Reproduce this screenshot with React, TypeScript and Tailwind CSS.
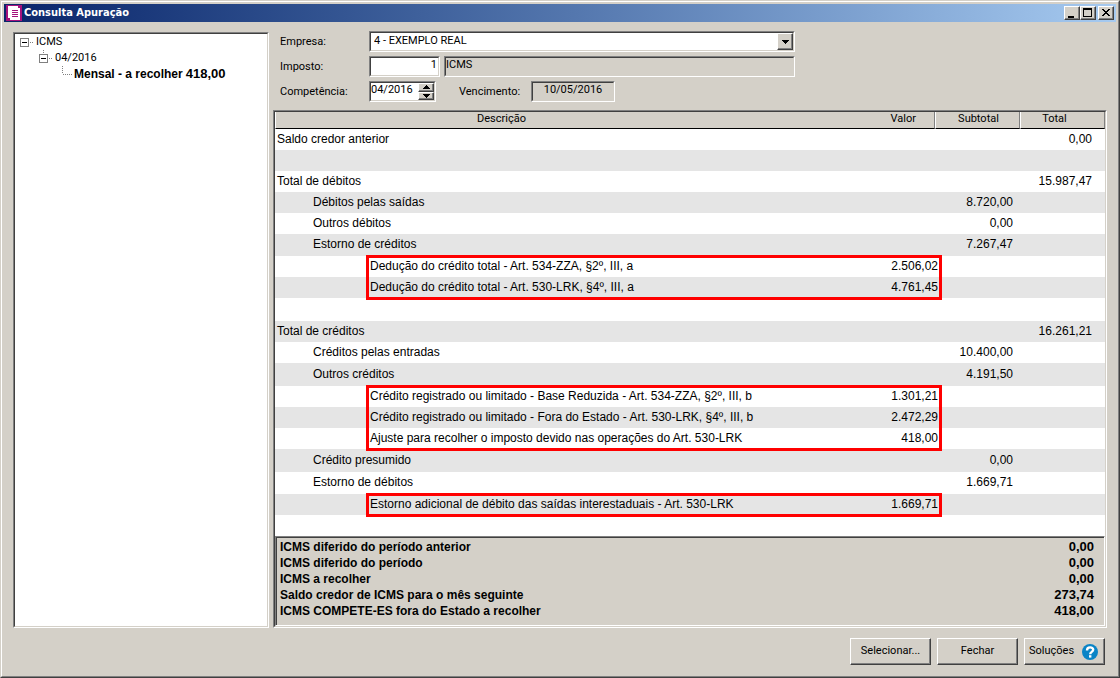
import { useState } from "react";

const lines = [
  { label: "Saldo credor anterior", level: 0, total: "0,00", height: "h-[21px]" },
  { height: "h-[21px]" },
  { label: "Total de débitos", level: 0, total: "15.987,47", height: "h-[21px]" },
  { label: "Débitos pelas saídas", level: 1, subtotal: "8.720,00", height: "h-[21px]" },
  { label: "Outros débitos", level: 1, subtotal: "0,00", height: "h-[21px]" },
  { label: "Estorno de créditos", level: 1, subtotal: "7.267,47", height: "h-[22px]" },
  {
    label: "Dedução do crédito total - Art. 534-ZZA, §2º, III, a",
    level: 2,
    valor: "2.506,02",
    height: "h-[21px]",
    frame: "h-[45px]",
  },
  {
    label: "Dedução do crédito total - Art. 530-LRK, §4º, III, a",
    level: 2,
    valor: "4.761,45",
    height: "h-[21px]",
  },
  { height: "h-[23px]" },
  { label: "Total de créditos", level: 0, total: "16.261,21", height: "h-[21px]" },
  { label: "Créditos pelas entradas", level: 1, subtotal: "10.400,00", height: "h-[21px]" },
  { label: "Outros créditos", level: 1, subtotal: "4.191,50", height: "h-[23px]" },
  {
    label: "Crédito registrado ou limitado - Base Reduzida - Art. 534-ZZA, §2º, III, b",
    level: 2,
    valor: "1.301,21",
    height: "h-[21px]",
    frame: "h-[66px]",
  },
  {
    label: "Crédito registrado ou limitado - Fora do Estado - Art. 530-LRK, §4º, III, b",
    level: 2,
    valor: "2.472,29",
    height: "h-[21px]",
  },
  {
    label: "Ajuste para recolher o imposto devido nas operações do Art. 530-LRK",
    level: 2,
    valor: "418,00",
    height: "h-[21px]",
  },
  { label: "Crédito presumido", level: 1, subtotal: "0,00", height: "h-[23px]" },
  { label: "Estorno de débitos", level: 1, subtotal: "1.669,71", height: "h-[22px]" },
  {
    label: "Estorno adicional de débito das saídas interestaduais - Art. 530-LRK",
    level: 2,
    valor: "1.669,71",
    height: "h-[21px]",
    frame: "h-[24px]",
  },
  { height: "h-[21px]" },
];

const summary = [
  ["ICMS diferido do período anterior", "0,00"],
  ["ICMS diferido do período", "0,00"],
  ["ICMS a recolher", "0,00"],
  ["Saldo credor de ICMS para o mês seguinte", "273,74"],
  ["ICMS COMPETE-ES fora do Estado a recolher", "418,00"],
];

const indent = ["pl-[2px]", "pl-[38px]", "pl-[95px]"];

const sunken =
  "border border-t-[#808080] border-l-[#808080] border-r-white border-b-white";
const sunkenInner =
  "border border-t-[#404040] border-l-[#404040] border-r-[#d4d0c8] border-b-[#d4d0c8]";
const raised =
  "bg-[#d4d0c8] border border-t-white border-l-white border-r-[#404040] border-b-[#404040] shadow-[inset_-1px_-1px_0_#808080]";

function TitleButton({ label, children }: { label: string; children: any }) {
  return (
    <button
      aria-label={label}
      className={`w-4 h-[14px] flex items-center justify-center ${raised}`}
    >
      <svg width="14" height="12" viewBox="0 0 14 12" shapeRendering="crispEdges">
        {children}
      </svg>
    </button>
  );
}

function Expander({ nested }: { nested?: boolean }) {
  return (
    <svg width="14" height="16" viewBox="0 0 14 16" shapeRendering="crispEdges" className="shrink-0">
      {nested && <path d="M4.5 0v4" stroke="#808080" strokeDasharray="1 1" />}
      <rect x="0.5" y="4.5" width="8" height="8" fill="white" stroke="#808080" />
      <path d="M2 8.5h5" stroke="black" />
      <path d="M10 8.5h3" stroke="#808080" strokeDasharray="1 1" />
    </svg>
  );
}

export default function App() {
  const [imposto, setImposto] = useState("1");
  const [competencia, setCompetencia] = useState("04/2016");

  return (
    <div className="min-h-screen flex flex-col bg-[#d4d0c8] text-black text-[11px] font-[Roboto,'Liberation_Sans',sans-serif] border border-t-[#d4d0c8] border-l-[#d4d0c8] border-r-[#404040] border-b-[#404040]">
      <div className="flex-1 flex flex-col p-[2px] border border-t-white border-l-white border-r-[#808080] border-b-[#808080]">
        {/* Title bar */}
        <header className="h-[18px] flex items-center pl-[2px] pr-[2px] bg-linear-to-r from-[#0a246a] to-[#a6caf0]">
          <svg width="16" height="16" viewBox="0 0 16 16" className="mr-[2px] shrink-0" shapeRendering="crispEdges">
            <rect width="16" height="16" fill="#a5117c" />
            <path d="M2 1h10v2h2v12H4v-2H2z" fill="white" />
            <path d="M6 5.5h6M6 7.5h6M6 9.5h6M6 11.5h6" stroke="#a5117c" />
          </svg>
          <h1 className="flex-1 text-white font-bold text-[11px] font-['DejaVu_Sans_Condensed','DejaVu_Sans',sans-serif]">
            Consulta Apuração
          </h1>
          <div className="flex">
            <TitleButton label="Minimizar">
              <path d="M3 9h6v2H3z" />
            </TitleButton>
            <TitleButton label="Maximizar">
              <path d="M2 1h9v9H2zM3 3v6h7V3z" fillRule="evenodd" />
            </TitleButton>
            <div className="ml-[2px] flex">
              <TitleButton label="Fechar janela">
                <path d="M3 2h2v1h1v1h2V3h1V2h2v1h-1v1H9v1H8v1h1v1h1v1h1v1H9V8H8V7H6v1H5v1H3V8h1V7h1V6h1V5H5V4H4V3H3z" />
              </TitleButton>
            </div>
          </div>
        </header>

        <div className="flex-1 flex gap-1 pt-[10px] pl-[9px] pr-[9px]">
          {/* Tree */}
          <nav className={`w-[256px] shrink-0 flex ${sunken}`}>
            <ul className={`flex-1 bg-white pl-[5px] leading-4 ${sunkenInner}`}>
              <li>
                <div className="flex items-center gap-[2px]">
                  <Expander />
                  ICMS
                </div>
                <ul className="pl-[19px]">
                  <li>
                    <div className="flex items-center gap-[2px]">
                      <Expander nested />
                      04/2016
                    </div>
                    <div className="flex items-center pl-[23px] font-bold text-xs leading-4 font-['Liberation_Sans',Arial,sans-serif]">
                      <svg width="12" height="16" viewBox="0 0 12 16" shapeRendering="crispEdges">
                        <path d="M0.5 0v8M1 8.5h9" stroke="#808080" strokeDasharray="1 1" fill="none" />
                      </svg>
                      <span className="mr-[3px]">Mensal - a recolher</span>
                      <span className="text-[13px] leading-4">418,00</span>
                    </div>
                  </li>
                </ul>
              </li>
            </ul>
          </nav>

          <div className="flex-1 min-w-0 flex flex-col">
            {/* Filters */}
            <form className="flex flex-col gap-1 pl-[7px] -mt-px mb-2" onSubmit={(e) => e.preventDefault()}>
              <div className="flex items-center">
                <label htmlFor="empresa" className="w-[89px] pt-0.5">Empresa:</label>
                <div className={`w-[426px] h-[21px] flex relative ${sunken}`}>
                  <select
                    id="empresa"
                    className={`flex-1 appearance-none bg-white pl-[3px] pb-0.5 leading-4 ${sunkenInner}`}
                  >
                    <option>4 - EXEMPLO REAL</option>
                  </select>
                  <span className={`absolute right-px top-px bottom-px w-4 flex items-center justify-center pointer-events-none ${raised}`}>
                    <svg width="7" height="4" viewBox="0 0 7 4" shapeRendering="crispEdges">
                      <path d="M0 0h7v1H6v1H5v1H4v1H3V3H2V2H1V1H0z" />
                    </svg>
                  </span>
                </div>
              </div>

              <div className="flex items-center">
                <label htmlFor="imposto" className="w-[89px] pt-0.5">Imposto:</label>
                <div className={`w-[71px] h-[21px] flex mr-1 ${sunken}`}>
                  <input
                    id="imposto"
                    value={imposto}
                    onChange={(e) => setImposto(e.target.value)}
                    className={`w-full bg-white text-right pr-px pb-0.5 ${sunkenInner}`}
                  />
                </div>
                <div className={`w-[351px] h-[21px] flex ${sunken}`}>
                  <input
                    aria-label="Nome do imposto"
                    readOnly
                    value="ICMS"
                    className={`w-full pb-0.5 ${sunkenInner}`}
                  />
                </div>
              </div>

              <div className="flex items-center">
                <label htmlFor="competencia" className="w-[89px] pt-0.5">Competência:</label>
                <div className={`w-[67px] h-[21px] flex mr-[23px] ${sunken}`}>
                  <div className={`flex w-full bg-white ${sunkenInner}`}>
                    <input
                      id="competencia"
                      value={competencia}
                      onChange={(e) => setCompetencia(e.target.value)}
                      className="w-0 flex-1 pb-0.5"
                    />
                    <div className="w-4 flex flex-col">
                      <button aria-label="Próxima" className={`flex-1 flex items-center justify-center ${raised}`}>
                        <svg width="7" height="4" viewBox="0 0 7 4" shapeRendering="crispEdges">
                          <path d="M3 0h1v1h1v1h1v1h1v1H0V3h1V2h1V1h1z" />
                        </svg>
                      </button>
                      <button aria-label="Anterior" className={`flex-1 flex items-center justify-center ${raised}`}>
                        <svg width="7" height="4" viewBox="0 0 7 4" shapeRendering="crispEdges">
                          <path d="M0 0h7v1H6v1H5v1H4v1H3V3H2V2H1V1H0z" />
                        </svg>
                      </button>
                    </div>
                  </div>
                </div>
                <label htmlFor="vencimento" className="w-[72px] pt-0.5">Vencimento:</label>
                <div className={`w-[84px] h-[21px] flex ${sunken}`}>
                  <input
                    id="vencimento"
                    readOnly
                    value="10/05/2016"
                    className={`w-full text-center pb-0.5 ${sunkenInner}`}
                  />
                </div>
              </div>
            </form>

            {/* Statement */}
            <div className={`flex-1 flex ${sunken}`}>
              <div className={`flex-1 min-w-0 flex flex-col bg-white ${sunkenInner}`}>
                <table className="w-full table-fixed border-separate border-spacing-0">
                  <colgroup>
                    <col />
                    <col className="w-[208px]" />
                    <col className="w-[85px]" />
                    <col className="w-[85px]" />
                  </colgroup>
                  <thead className="bg-[#d4d0c8]">
                    <tr className="h-[17px] leading-[14px] align-top">
                      <th className="font-normal p-0 border-b border-black border-l border-l-white">Descrição</th>
                      <th className="font-normal p-0 pr-[18px] text-right border-b border-b-black border-r border-r-[#808080]">Valor</th>
                      <th className="font-normal p-0 pl-0.5 border-b border-b-black border-l border-l-white border-r border-r-[#808080]">Subtotal</th>
                      <th className="font-normal p-0 pr-4 border-b border-b-black border-l border-l-white border-r border-r-[#808080]">Total</th>
                    </tr>
                  </thead>
                  <tbody className="text-xs leading-[18px] font-['Liberation_Sans',Arial,sans-serif]">
                    {lines.map((line, i) => (
                      <tr key={i} className={`relative odd:bg-white even:bg-[#e5e5e5] ${line.height}`}>
                        <td className={`p-0 pb-0.5 whitespace-nowrap ${indent[line.level ?? 0]}`}>
                          {line.label}
                          {line.frame && (
                            <span
                              className={`absolute z-10 -top-px left-[91px] right-[163px] border-3 border-[#ff0000] pointer-events-none ${line.frame}`}
                            />
                          )}
                        </td>
                        <td className="p-0 pb-0.5 text-right">
                          <div className="-mr-[3px]">{line.valor}</div>
                        </td>
                        <td className="p-0 pb-0.5 pr-[7px] text-right">{line.subtotal}</td>
                        <td className="p-0 pb-0.5 pr-[13px] text-right">{line.total}</td>
                      </tr>
                    ))}
                  </tbody>
                </table>

                <div className={`flex-1 flex ${sunken}`}>
                  <dl className="flex-1 bg-[#d4d0c8] border-t border-l border-[#404040] pt-px pl-[3px] pr-[10px] pb-1 font-bold text-xs leading-4 font-['Liberation_Sans',Arial,sans-serif]">
                    {summary.map(([label, value]) => (
                      <div key={label} className="flex justify-between">
                        <dt>{label}</dt>
                        <dd className="text-[13px] leading-4">{value}</dd>
                      </div>
                    ))}
                  </dl>
                </div>
              </div>
            </div>
          </div>
        </div>

        <footer className="flex justify-end gap-1.5 pt-[10px] pb-[9px] pr-[11px]">
          <button className={`w-[81px] h-[27px] ${raised}`}>Selecionar...</button>
          <button className={`w-[81px] h-[27px] ${raised}`}>Fechar</button>
          <button className={`w-[81px] h-[27px] flex items-center justify-between pl-1 pr-[5px] ${raised}`}>
            Soluções
            <svg width="18" height="18" viewBox="0 0 18 18">
              <circle cx="9" cy="9" r="8" fill="#0a84c6" />
              <path d="M6 7.4c0-4 6.2-3.8 6.2-.6 0 2.2-3 2-3 4.4" fill="none" stroke="white" strokeWidth="2.4" />
              <rect x="8" y="12.2" width="2.4" height="2.4" fill="white" />
            </svg>
          </button>
        </footer>
      </div>
    </div>
  );
}
